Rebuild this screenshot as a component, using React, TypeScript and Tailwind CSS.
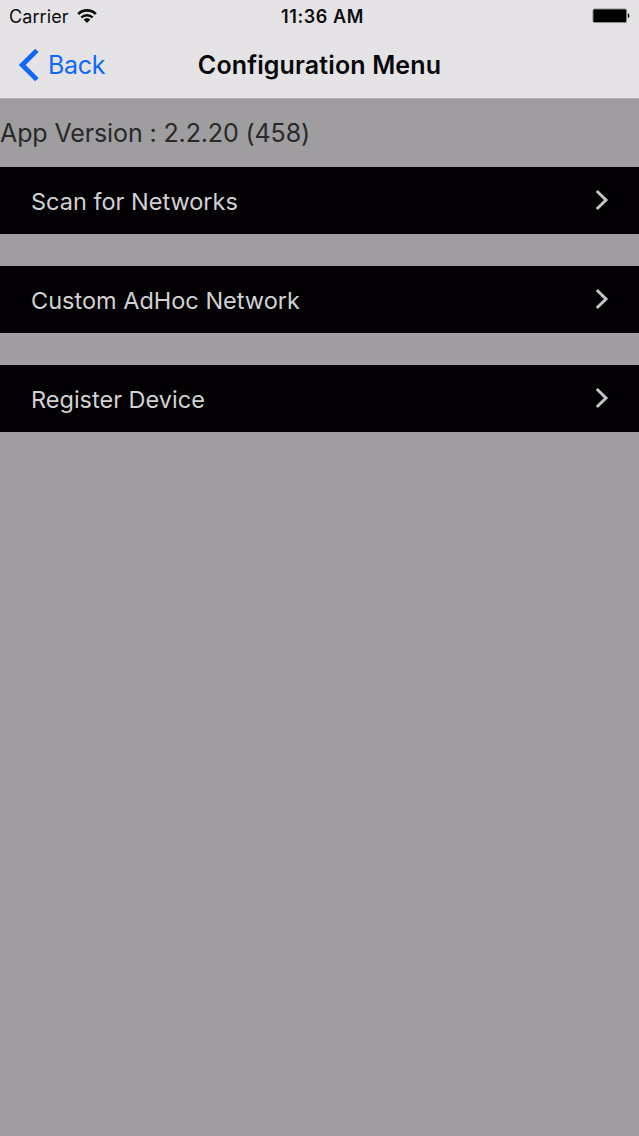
import React from 'react';

interface MenuRowProps {
  label: string;
}

const WifiIcon: React.FC = () => (
  <svg className="mb-[2px]" width="20" height="14" viewBox="0 0 20 14" fill="none" stroke="#0b0b0d">
    <path d="M1.2 5.1C6 0.1 14 0.1 18.8 5.1" strokeWidth="2.7" />
    <path d="M4.3 8.5C7.4 5.4 12.6 5.4 15.7 8.5" strokeWidth="2.4" />
    <path d="M10 13.9L6.7 10.7C8.5 8.9 11.5 8.9 13.3 10.7Z" fill="#0b0b0d" stroke="none" />
  </svg>
);

const BatteryIcon: React.FC = () => (
  <svg className="mb-[2px]" width="38" height="16" viewBox="0 0 38 16">
    <rect x="0.5" y="0.5" width="34.5" height="14.5" rx="2.2" fill="#8a8a8c" />
    <rect x="1.4" y="1.4" width="32.7" height="12.7" rx="1.2" fill="#000" />
    <path d="M35.8 5.3C38 5.8 38 9.7 35.8 10.2Z" fill="#000" />
  </svg>
);

const StatusBar: React.FC = () => (
  <div className="grid h-8 grid-cols-3 items-center pl-[9px] pr-[9px] text-[#0b0b0d]">
    <div className="flex items-center gap-[8px]">
      <span className="pt-px text-[18px] leading-8 tracking-[0.1px]">Carrier</span>
      <WifiIcon />
    </div>
    <span className="pl-[6px] pt-px text-center text-[18px] font-semibold leading-8 tracking-[0.6px]">11:36 AM</span>
    <div className="flex justify-end">
      <BatteryIcon />
    </div>
  </div>
);

const NavBar: React.FC = () => (
  <div className="grid h-[66px] grid-cols-[1fr_auto_1fr] items-center pl-[18px] pr-[18px]">
    <button className="flex items-center gap-[9px] text-[#0f68f8]">
      <svg width="21" height="34" viewBox="0 0 21 34" fill="none" stroke="currentColor" strokeWidth="4.8">
        <path d="M18.9 2.4L4.2 17L18.9 31.6" />
      </svg>
      <span className="pt-[2px] text-[25px] tracking-[-0.3px]">Back</span>
    </button>
    <h1 className="pt-[2px] text-[25px] font-semibold tracking-[0.13px] text-[#08080a]">Configuration Menu</h1>
  </div>
);

const MenuRow: React.FC<MenuRowProps> = ({ label }) => (
  <button className="flex h-[67px] w-full items-center justify-between bg-[#020003] pl-[31px] pr-[30px] text-[#d2d1d3]">
    <span className="pt-[2px] text-[23.5px]">{label}</span>
    <svg className="mb-[2px]" width="15" height="22" viewBox="0 0 15 22" fill="none" stroke="#c4c3c5" strokeWidth="3">
      <path d="M2.8 2L12 11L2.8 20" />
    </svg>
  </button>
);

const items: MenuRowProps[] = [
  { label: 'Scan for Networks' },
  { label: 'Custom AdHoc Network' },
  { label: 'Register Device' },
];

export default function App() {
  return (
    <div className="min-h-[1136px] w-full bg-[#9f9d9f] font-['Inter',sans-serif]">
      <header className="h-[99px] border-b border-[#b0aeb0] bg-[#e5e3e6]">
        <StatusBar />
        <NavBar />
      </header>
      <p className="flex h-[68px] items-center pt-[2px] text-[25px] tracking-[-0.12px] text-[#29282a]">
        App Version : 2.2.20 (458)
      </p>
      <main className="flex flex-col gap-8">
        {items.map((item) => (
          <MenuRow key={item.label} {...item} />
        ))}
      </main>
    </div>
  );
}
